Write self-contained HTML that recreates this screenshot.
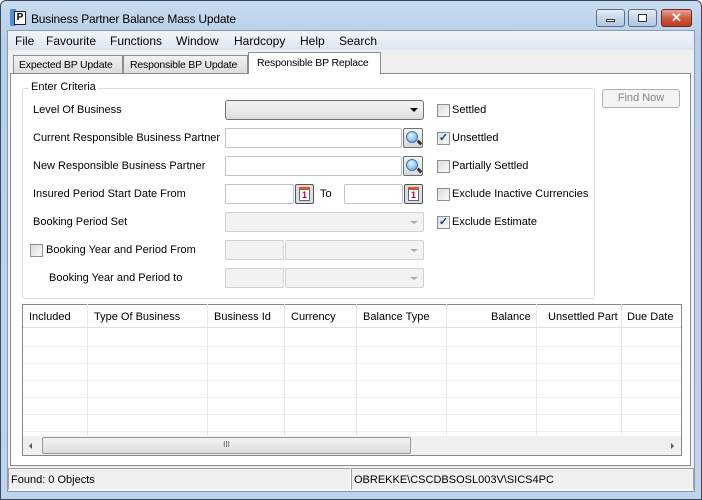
<!DOCTYPE html>
<html><head><style>
*{box-sizing:border-box;margin:0;padding:0}
body{width:702px;height:500px;overflow:hidden;font-family:"Liberation Sans",sans-serif;font-size:11px;color:#000;background:#fff;position:relative}
.a{position:absolute}
.win{left:0;top:0;width:702px;height:500px;background:linear-gradient(#c9dbef,#b6cfe9 40px,#bed4ec);border:1px solid #3a4a5c;border-radius:6px 6px 0 0}
.tb{top:9px;height:18px;border:1px solid #5a6f8a;border-radius:3px;background:linear-gradient(#e6eef8,#c6d6ea 50%,#b2c6de)}
.inp{background:#fff;border:1px solid #bcc4cc;height:20px;border-radius:2px}
.dis{background:#f2f2f2;border:1px solid #cfd3d7;height:20px;border-radius:2px}
.cb{width:13px;height:13px;border:1px solid #8e8f8f;background:linear-gradient(135deg,#dcdcdc,#fbfbfb)}
.lbl{white-space:nowrap}
.col{top:304px;height:132px;border-left:1px solid #e8e8e8}
.hd{top:311px;white-space:nowrap}
.tab{font-size:10.5px;letter-spacing:-0.2px}
</style></head><body>
<div class="a win"></div>
<div class="a" style="left:10px;top:9px;width:6px;height:17px;background:#4a8fd0;border-radius:1px"></div>
<div class="a" style="left:14px;top:11px;width:12px;height:14px;border:1px solid #222;background:#fff;font-size:10px;font-weight:bold;line-height:12px;text-align:center">P</div>
<div class="a lbl" style="left:31px;top:12px;font-size:12px;letter-spacing:-0.2px">Business Partner Balance Mass Update</div>
<div class="a tb" style="left:596px;width:29px"><div class="a" style="left:9px;top:9px;width:9px;height:3px;background:#fff;border:1px solid #333"></div></div>
<div class="a tb" style="left:628px;width:29px"><div class="a" style="left:9px;top:4px;width:9px;height:8px;border:1px solid #333;background:#fff"></div></div>
<div class="a tb" style="left:661px;width:31px;background:linear-gradient(#e8a393,#d0593f 50%,#c03a22);border-color:#6b2a1e;color:#fff;font-weight:bold;font-size:13px;text-align:center;line-height:15px">✕</div>
<div class="a" style="left:7px;top:30px;width:688px;height:462px;background:#f0f0f0;border:1px solid #8a9cb2"></div>
<div class="a" style="left:8px;top:31px;width:686px;height:19px;background:linear-gradient(#f2f5fa,#dde6f2)"></div>
<div class="a lbl" style="left:15px;top:34px;font-size:12px">File</div>
<div class="a lbl" style="left:46px;top:34px;font-size:12px">Favourite</div>
<div class="a lbl" style="left:110px;top:34px;font-size:12px">Functions</div>
<div class="a lbl" style="left:176px;top:34px;font-size:12px">Window</div>
<div class="a lbl" style="left:234px;top:34px;font-size:12px">Hardcopy</div>
<div class="a lbl" style="left:300px;top:34px;font-size:12px">Help</div>
<div class="a lbl" style="left:339px;top:34px;font-size:12px">Search</div>
<div class="a" style="left:10px;top:73px;width:681px;height:393px;background:#fff;border:1px solid #898c95"></div>
<div class="a lbl tab" style="left:13px;top:55px;width:110px;height:19px;border:1px solid #898c95;background:linear-gradient(#f2f2f2,#dcdcdc);padding:3px 0 0 5px">Expected BP Update</div>
<div class="a lbl tab" style="left:123px;top:55px;width:125px;height:19px;border:1px solid #898c95;background:linear-gradient(#f2f2f2,#dcdcdc);padding:3px 0 0 6px">Responsible BP Update</div>
<div class="a lbl tab" style="left:248px;top:52px;width:133px;height:22px;border:1px solid #898c95;border-bottom:none;background:#fff;padding:4px 0 0 8px">Responsible BP Replace</div>
<div class="a" style="left:22px;top:88px;width:573px;height:211px;border:1px solid #d5dfe5;border-radius:3px"></div>
<div class="a lbl" style="left:29px;top:81px;background:#fff;padding:0 2px">Enter Criteria</div>
<div class="a lbl" style="left:33px;top:104px">Level Of Business</div>
<div class="a lbl" style="left:33px;top:132px">Current Responsible Business Partner</div>
<div class="a lbl" style="left:33px;top:160px">New Responsible Business Partner</div>
<div class="a lbl" style="left:33px;top:188px">Insured Period Start Date From</div>
<div class="a lbl" style="left:33px;top:216px">Booking Period Set</div>
<div class="a cb" style="left:30px;top:244px"></div>
<div class="a lbl" style="left:46px;top:244px">Booking Year and Period From</div>
<div class="a lbl" style="left:49px;top:272px">Booking Year and Period to</div>
<div class="a" style="left:225px;top:100px;width:199px;height:20px;border:1px solid #707070;border-radius:3px;background:linear-gradient(#f2f2f2,#ebebeb 50%,#dcdcdc)"><div class="a" style="right:5px;top:7px;border:4px solid transparent;border-top:4px solid #000;border-bottom:none"></div></div>
<div class="a inp" style="left:225px;top:128px;width:177px"></div>
<div class="a" style="left:403px;top:128px;width:20px;height:20px;border:1px solid #707070;border-radius:2px;background:linear-gradient(#f3f3f3,#d8d8d8)"><div class="a" style="left:2px;top:2px;width:12px;height:12px;border-radius:50%;background:radial-gradient(circle at 40% 35%,#e6f4ff,#4fa1e4);border:1px solid #3d76ad"></div><div class="a" style="left:13px;top:12px;width:5px;height:3px;background:#333;transform:rotate(45deg)"></div></div>
<div class="a inp" style="left:225px;top:156px;width:177px"></div>
<div class="a" style="left:403px;top:156px;width:20px;height:20px;border:1px solid #707070;border-radius:2px;background:linear-gradient(#f3f3f3,#d8d8d8)"><div class="a" style="left:2px;top:2px;width:12px;height:12px;border-radius:50%;background:radial-gradient(circle at 40% 35%,#e6f4ff,#4fa1e4);border:1px solid #3d76ad"></div><div class="a" style="left:13px;top:12px;width:5px;height:3px;background:#333;transform:rotate(45deg)"></div></div>
<div class="a inp" style="left:225px;top:184px;width:69px"></div>
<div class="a" style="left:295px;top:184px;width:19px;height:20px;border:1px solid #555;border-radius:2px;background:#ddd"><div class="a" style="left:3px;top:2px;width:11px;height:14px;background:#fff;border:1px solid #4a6a9a;border-top:3px solid #d5562b;color:#c03;font-size:9px;font-weight:bold;text-align:center;line-height:10px">1</div></div>
<div class="a lbl" style="left:320px;top:188px">To</div>
<div class="a inp" style="left:344px;top:184px;width:59px"></div>
<div class="a" style="left:404px;top:184px;width:19px;height:20px;border:1px solid #555;border-radius:2px;background:#ddd"><div class="a" style="left:3px;top:2px;width:11px;height:14px;background:#fff;border:1px solid #4a6a9a;border-top:3px solid #d5562b;color:#c03;font-size:9px;font-weight:bold;text-align:center;line-height:10px">1</div></div>
<div class="a dis" style="left:225px;top:212px;width:199px"><div class="a" style="right:5px;top:8px;border:4px solid transparent;border-top:3px solid #aaa;border-bottom:none"></div></div>
<div class="a dis" style="left:225px;top:240px;width:59px"></div>
<div class="a dis" style="left:285px;top:240px;width:139px"><div class="a" style="right:5px;top:8px;border:4px solid transparent;border-top:3px solid #aaa;border-bottom:none"></div></div>
<div class="a dis" style="left:225px;top:268px;width:59px"></div>
<div class="a dis" style="left:285px;top:268px;width:139px"><div class="a" style="right:5px;top:8px;border:4px solid transparent;border-top:3px solid #aaa;border-bottom:none"></div></div>
<div class="a cb" style="left:437px;top:104px"></div><div class="a lbl" style="left:452px;top:104px">Settled</div>
<div class="a cb" style="left:437px;top:132px;color:#1e3f8a;font-size:11px;font-weight:bold;line-height:11px;text-align:center">✓</div><div class="a lbl" style="left:452px;top:132px">Unsettled</div>
<div class="a cb" style="left:437px;top:160px"></div><div class="a lbl" style="left:452px;top:160px">Partially Settled</div>
<div class="a cb" style="left:437px;top:188px"></div><div class="a lbl" style="left:452px;top:188px">Exclude Inactive Currencies</div>
<div class="a cb" style="left:437px;top:216px;color:#1e3f8a;font-size:11px;font-weight:bold;line-height:11px;text-align:center">✓</div><div class="a lbl" style="left:452px;top:216px">Exclude Estimate</div>
<div class="a" style="left:602px;top:89px;width:78px;height:19px;border:1px solid #adb2b5;border-radius:3px;background:#f4f4f4;color:#838383;text-align:center;line-height:17px">Find Now</div>
<div class="a" style="left:22px;top:304px;width:660px;height:152px;border:1px solid #828790;background:#fff"></div>
<div class="a" style="left:23px;top:305px;width:658px;height:23px;border-bottom:1px solid #e0e0e0"></div>
<div class="a" style="left:23px;top:346px;width:658px;border-top:1px solid #eee"></div>
<div class="a" style="left:23px;top:363px;width:658px;border-top:1px solid #eee"></div>
<div class="a" style="left:23px;top:380px;width:658px;border-top:1px solid #eee"></div>
<div class="a" style="left:23px;top:397px;width:658px;border-top:1px solid #eee"></div>
<div class="a" style="left:23px;top:414px;width:658px;border-top:1px solid #eee"></div>
<div class="a" style="left:23px;top:431px;width:658px;border-top:1px solid #eee"></div>
<div class="a col" style="left:87px"></div><div class="a col" style="left:207px"></div><div class="a col" style="left:284px"></div><div class="a col" style="left:356px"></div><div class="a col" style="left:446px"></div><div class="a col" style="left:536px"></div><div class="a col" style="left:621px"></div>
<div class="a hd" style="left:29px">Included</div>
<div class="a hd" style="left:94px">Type Of Business</div>
<div class="a hd" style="left:214px">Business Id</div>
<div class="a hd" style="left:291px">Currency</div>
<div class="a hd" style="left:363px">Balance Type</div>
<div class="a hd" style="left:491px">Balance</div>
<div class="a hd" style="left:548px">Unsettled Part</div>
<div class="a hd" style="left:627px">Due Date</div>
<div class="a" style="left:23px;top:436px;width:658px;height:19px;background:#f0f0f0"></div>
<div class="a" style="left:29px;top:443px;border:3px solid transparent;border-right:3px solid #555;border-left:none"></div>
<div class="a" style="left:671px;top:443px;border:3px solid transparent;border-left:3px solid #555;border-right:none"></div>
<div class="a" style="left:42px;top:437px;width:369px;height:17px;border:1px solid #999;border-radius:2px;background:linear-gradient(#f4f4f4,#dcdcdc);text-align:center;font-size:8px;line-height:14px;color:#555">III</div>
<div class="a" style="left:8px;top:468px;width:343px;height:22px;border:1px solid #a0a0a0;border-right-color:#fff;border-bottom-color:#fff"></div>
<div class="a" style="left:351px;top:468px;width:343px;height:22px;border:1px solid #a0a0a0;border-bottom-color:#fff"></div>
<div class="a lbl" style="left:11px;top:474px">Found: 0 Objects</div>
<div class="a lbl" style="left:354px;top:474px">OBREKKE\CSCDBSOSL003V\SICS4PC</div>
</body></html>
